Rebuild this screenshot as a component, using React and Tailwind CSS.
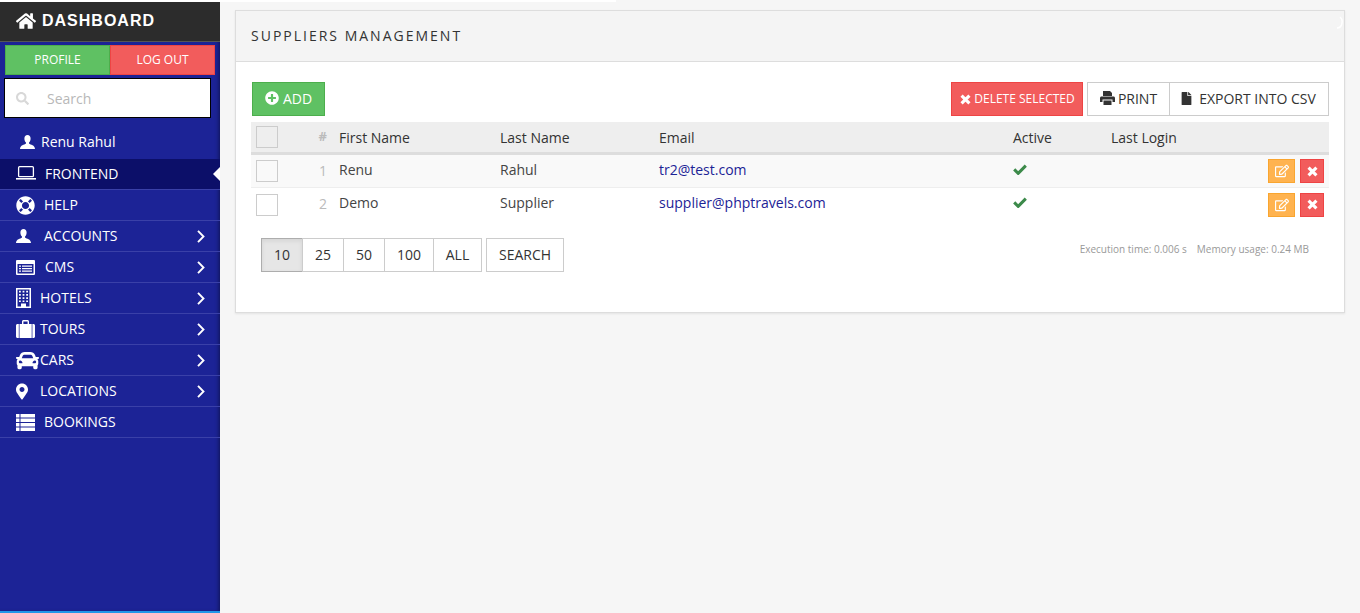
import React from 'react';
import { FaHome, FaSearch, FaLifeRing, FaCar, FaMapMarkerAlt, FaPlusCircle, FaFile, FaRegEdit } from 'react-icons/fa';

const UserIcon = ({ className }) => (
    <svg className={className} viewBox="0 0 15 14" fill="currentColor">
        <path d="M7.5 0C5.6 0 4.4 1.4 4.4 3.4c0 1.6.6 3 1.4 3.9.3.4.3 1 0 1.4C4.6 9.6 0 10 0 14h15c0-4-4.6-4.4-5.8-5.3-.3-.4-.3-1 0-1.4.8-.9 1.4-2.3 1.4-3.9C10.6 1.4 9.4 0 7.5 0z" />
    </svg>
);

const LaptopIcon = ({ className }) => (
    <svg className={className} viewBox="0 0 20 14" fill="none" stroke="currentColor">
        <rect x="2.6" y="0.7" width="14.8" height="10" rx="1" strokeWidth="1.3" />
        <path d="M0 12.8h20" strokeWidth="1.6" />
    </svg>
);

const CmsIcon = ({ className }) => (
    <svg className={className} viewBox="0 0 19 15" fill="currentColor">
        <path fillRule="evenodd" d="M1 0h17a1 1 0 0 1 1 1v13a1 1 0 0 1-1 1H1a1 1 0 0 1-1-1V1a1 1 0 0 1 1-1zM1.5 4v9.5h16V4z" />
        <path d="M3 5.5h2v1.3H3zM6 5.5h10v1.3H6zM3 8h2v1.3H3zM6 8h10v1.3H6zM3 10.5h2v1.3H3zM6 10.5h10v1.3H6z" />
    </svg>
);

const HotelIcon = ({ className }) => (
    <svg className={className} viewBox="0 0 15 20" fill="currentColor">
        <path fillRule="evenodd" d="M0 0h15v20H0zM1.5 1.5v17h3.5v-3h5v3h3.5v-17z" />
        <path d="M3 2.7h1.8v1.8H3zM6.6 2.7h1.8v1.8H6.6zM10.2 2.7H12v1.8h-1.8zM3 6h1.8v1.8H3zM6.6 6h1.8v1.8H6.6zM10.2 6H12v1.8h-1.8zM3 9.3h1.8v1.8H3zM6.6 9.3h1.8v1.8H6.6zM10.2 9.3H12v1.8h-1.8zM3 12.6h1.8v1.4H3zM6.6 12.6h1.8v1.4H6.6zM10.2 12.6H12v1.4h-1.8z" />
    </svg>
);

const SuitcaseIcon = ({ className }) => (
    <svg className={className} viewBox="0 0 19 18" fill="currentColor">
        <path fillRule="evenodd" d="M6 4V1.5C6 .7 6.7 0 7.5 0h4c.8 0 1.5.7 1.5 1.5V4h-1.4V1.4H7.4V4z" />
        <path d="M2.8 4v14H1.5C.7 18 0 17.300 0 16.500v-11C0 4.700.7 4 1.500 4zM15.700 4H3.500v14h12.200zM16.400 4h1.100c.8 0 1.500.7 1.500 1.500v11c0 .8-.7 1.500-1.500 1.500h-1.100z" />
    </svg>
);

const ListIcon = ({ className }) => (
    <svg className={className} viewBox="0 0 19 17" fill="currentColor">
        <path d="M0 0h3.500v3.500H0zM4.500 0H19v3.500H4.500zM0 4.500h3.500V8H0zM4.500 4.500H19V8H4.500zM0 9h3.500v3.500H0zM4.500 9H19v3.500H4.500zM0 13.500h3.500V17H0zM4.500 13.500H19V17H4.500z" />
    </svg>
);

const Chevron = () => (
    <svg className="ml-auto w-[8px] h-[13px] text-white" viewBox="0 0 8 13" fill="none" stroke="currentColor" strokeWidth="1.9">
        <path d="M1 .8l5.500 5.700L1 12.200" />
    </svg>
);

const CrossIcon = ({ className }) => (
    <svg className={className} viewBox="0 0 12 12" fill="none" stroke="currentColor" strokeWidth="3.4">
        <path d="M1.700 1.700l8.600 8.600M10.300 1.700l-8.600 8.600" />
    </svg>
);

const CheckIcon = () => (
    <svg className="w-[14px] h-[11px] text-[#3c8a4a]" viewBox="0 0 14 11" fill="none" stroke="currentColor" strokeWidth="3">
        <path d="M1.200 5.400l4 4L12.800 1.600" />
    </svg>
);

const PrintIcon = () => (
    <svg className="w-[15px] h-[14px] mr-[3px]" viewBox="0 0 15 14" fill="currentColor">
        <path d="M3 0h7l2 2v3H3zM1.500 5.500h12c.8 0 1.500.7 1.500 1.500v4h-2.500V8.500h-10V11H0V7c0-.8.7-1.500 1.500-1.500zM3.500 9.500h8V14h-8z" />
    </svg>
);

const menu = [
    { label: 'HELP', icon: <FaLifeRing className="w-[19px] h-[19px]" />, box: 'w-[28px]' },
    { label: 'ACCOUNTS', icon: <UserIcon className="w-[15px] h-[14px]" />, box: 'w-[28px]', arrow: true },
    { label: 'CMS', icon: <CmsIcon className="w-[19px] h-[15px]" />, box: 'w-[29px]', arrow: true },
    { label: 'HOTELS', icon: <HotelIcon className="w-[15px] h-[20px]" />, box: 'w-[24px]', arrow: true },
    { label: 'TOURS', icon: <SuitcaseIcon className="w-[19px] h-[18px]" />, box: 'w-[24px]', arrow: true },
    { label: 'CARS', icon: <FaCar className="w-[23px] h-[23px] shrink-0" />, box: 'w-[24px]', arrow: true },
    { label: 'LOCATIONS', icon: <FaMapMarkerAlt className="w-[12px] h-[17px]" />, box: 'w-[24px]', arrow: true },
    { label: 'BOOKINGS', icon: <ListIcon className="w-[19px] h-[17px]" />, box: 'w-[28px]' },
];

const suppliers = [
    { id: 1, first: 'Renu', last: 'Rahul', email: 'tr2@test.com', bg: 'bg-[#f9f9f9] border-b border-[#eee]' },
    { id: 2, first: 'Demo', last: 'Supplier', email: 'supplier@phptravels.com', bg: 'bg-white' },
];

const cols = 'grid grid-cols-[88px_161px_159px_354px_98px_1fr] items-center';

const Checkbox = () => <span className="ml-[5px] block w-[22px] h-[22px] border border-[#ccc] bg-transparent" />;

const Sidebar = () => (
    <aside className="w-[220px] shrink-0 h-full flex flex-col pt-[2px] bg-[#1c2396] border-b-2 border-[#2196e8] text-white shadow-[inset_-3px_0_4px_-2px_rgba(0,0,0,0.45)]">
        <div className="h-[40px] bg-[#2c2c2c] border-b border-[#555] flex items-center pl-4 pb-[2px] font-['Liberation_Sans',sans-serif] font-bold text-[16px] tracking-[1px]">
            <FaHome className="text-[20px] mr-[6px]" />
            DASHBOARD
        </div>
        <div className="flex mx-[5px] mt-[3px] h-[30px] text-[12px]">
            <div className="flex-1 flex items-center justify-center bg-[#5fc163] border border-[#4cae4c]">PROFILE</div>
            <div className="flex-1 flex items-center justify-center bg-[#f25c5c] border border-[#ee4444]">LOG OUT</div>
        </div>
        <div className="mx-[4px] w-[207px] mt-[3px] h-[40px] bg-white border border-black flex items-center pl-[11px] text-[#b8b8b8] text-[14px]">
            <FaSearch className="text-[13px] text-[#d8d8d8]" />
            <span className="ml-[18px]">Search</span>
        </div>
        <div className="h-[41px] flex items-center pl-[20px] pt-[6px] text-[14px]">
            <UserIcon className="w-[15px] h-[14px] mr-[6px]" />
            Renu Rahul
        </div>
        <div className="h-[31px] bg-[#0c0f69] border-b border-[#3a40a8] flex items-center pl-4 pb-[2px] text-[14px] relative">
            <LaptopIcon className="w-[20px] h-[14px]" />
            <span className="ml-[9px]">FRONTEND</span>
            <span className="absolute right-0 top-[8px] border-y-[7px] border-y-transparent border-r-[7px] border-r-white" />
        </div>
        {menu.map(({ label, icon, box, arrow }) => (
            <div key={label} className="h-[31px] border-b border-[#3a40a8] flex items-center pl-4 pr-[15px] text-[14px]">
                <span className={`${box} flex items-center shrink-0`}>{icon}</span>
                <span className="-mt-[2px]">{label}</span>
                {arrow && <Chevron />}
            </div>
        ))}
    </aside>
);

const App = () => {
    return (
        <div className="relative w-[1360px] h-[613px] flex overflow-hidden bg-[#f6f6f6] font-['Open_Sans',sans-serif] text-[#333]">
            {/* page load bar along the top edge */}
            <div className="absolute top-0 left-0 w-[616px] h-[2px] bg-white" />
            <Sidebar />
            <main className="flex-1 min-w-0 pl-[15px] pr-[15px] pt-[10px]">
                <section className="relative h-[303px] bg-white border border-[#ddd] shadow-[0_1px_2px_rgba(0,0,0,0.08)]">
                    <svg className="absolute right-0 top-[5px] w-[8px] h-[14px] text-white" viewBox="0 0 8 14" fill="none" stroke="currentColor" strokeWidth="1.500">
                        <path d="M4 1c2 1.500 2.500 5 1.500 8-.6 1.800-2.500 3-4.500 3" />
                    </svg>
                    <div className="h-[51px] bg-[#f4f4f4] border-b border-[#ddd] flex items-center pl-[15px] pb-[2px] text-[14px] font-medium tracking-[2px] text-[#333]">
                        SUPPLIERS MANAGEMENT
                    </div>
                    <div className="pl-[15px] pr-[15px] pt-[20px]">
                        <div className="flex items-start h-[34px] pl-[1px] text-[14px]">
                            <button className="h-[34px] w-[73px] flex items-center justify-center pb-[2px] bg-[#5fc163] border border-[#4cae4c] text-white">
                                <FaPlusCircle className="text-[14px] mr-[4px]" />
                                ADD
                            </button>
                            <button className="ml-auto h-[34px] w-[132px] flex items-center justify-center pl-[1px] bg-[#f25c5c] border border-[#ee4444] text-white text-[12px]">
                                <CrossIcon className="w-[11px] h-[11px] mr-[3px]" />
                                DELETE SELECTED
                            </button>
                            <button className="ml-[4px] h-[34px] w-[83px] flex items-center justify-center pb-[2px] bg-white border border-[#ccc]">
                                <PrintIcon />
                                PRINT
                            </button>
                            <button className="ml-[-1px] h-[34px] w-[160px] flex items-center justify-center pb-[2px] pr-[2px] bg-white border border-[#ccc]">
                                <FaFile className="text-[13px] mr-[6px]" />
                                EXPORT INTO CSV
                            </button>
                        </div>
                        <div className={`${cols} mt-[6px] h-[33px] bg-[#eee] border-b-[3px] border-[#ddd] text-[14px] font-medium`}>
                            <div className="relative h-full flex items-center">
                                <Checkbox />
                                <span className="absolute right-[12px] text-[#bbb] text-[13px] font-bold">#</span>
                            </div>
                            <div>First Name</div>
                            <div>Last Name</div>
                            <div>Email</div>
                            <div>Active</div>
                            <div>Last Login</div>
                        </div>
                        {suppliers.map((s) => (
                            <div key={s.id} className={`${cols} h-[33px] ${s.bg} text-[14px] text-[#444]`}>
                                <div className="relative h-full flex items-center">
                                    <Checkbox />
                                    <span className="absolute right-[12px] top-[5px] text-[#bbb]">{s.id}</span>
                                </div>
                                <div className="-mt-[4px]">{s.first}</div>
                                <div className="-mt-[4px]">{s.last}</div>
                                <div className="-mt-[4px] text-[#1c2396]">{s.email}</div>
                                <div className="-mt-[4px]"><CheckIcon /></div>
                                <div className="flex justify-end gap-[5px] pr-[5px]">
                                    <button className="w-[27px] h-[24px] flex items-center justify-center bg-[#ffb34f] border border-[#f9a52f] text-white text-[14px]"><FaRegEdit /></button>
                                    <button className="w-[24px] h-[24px] flex items-center justify-center bg-[#f25c5c] border border-[#ee4444] text-white"><CrossIcon className="w-[11px] h-[11px]" /></button>
                                </div>
                            </div>
                        ))}
                        <div className="flex items-start mt-[17px] pl-[10px] text-[14px]">
                            {[['10', 'w-[42px]'], ['25', 'w-[42px]'], ['50', 'w-[42px]'], ['100', 'w-[50px]'], ['ALL', 'w-[49px]']].map(([n, w], i) => (
                                <button
                                    key={n}
                                    className={`${w} h-[34px] pb-[2px] ${i === 0 ? 'bg-[#e6e6e6] border-[#adadad] shadow-[inset_0_2px_4px_rgba(0,0,0,0.08)]' : 'bg-white border-[#ccc] -ml-px'} border flex items-center justify-center`}
                                >
                                    {n}
                                </button>
                            ))}
                            <button className="ml-[4px] w-[78px] h-[34px] pb-[2px] bg-white border border-[#ccc] flex items-center justify-center">SEARCH</button>
                            <div className="ml-auto pr-[20px] mt-[4px] text-[10px] text-[#999] flex gap-[10px]">
                                <span>Execution time: 0.006 s</span>
                                <span>Memory usage: 0.24 MB</span>
                            </div>
                        </div>
                    </div>
                </section>
            </main>
        </div>
    );
};

export default App;
